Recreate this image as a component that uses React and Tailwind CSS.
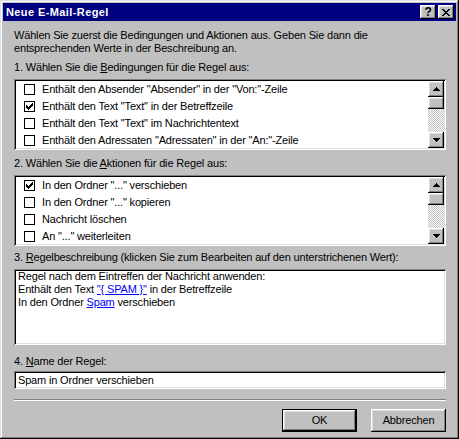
const raised =
  "shadow-[inset_-1px_-1px_#000,inset_1px_1px_#fff,inset_-2px_-2px_#808080,inset_2px_2px_#dfdfdf]";
const sunken =
  "shadow-[inset_1px_1px_#808080,inset_-1px_-1px_#fff,inset_2px_2px_#000,inset_-2px_-2px_#dfdfdf]";

const conditions = [
  { label: 'Enthält den Absender "Absender" in der "Von:"-Zeile', checked: false },
  { label: 'Enthält den Text "Text" in der Betreffzeile', checked: true },
  { label: 'Enthält den Text "Text" im Nachrichtentext', checked: false },
  { label: 'Enthält den Adressaten "Adressaten" in der "An:"-Zeile', checked: false },
];

const actions = [
  { label: 'In den Ordner "..." verschieben', checked: true },
  { label: 'In den Ordner "..." kopieren', checked: false },
  { label: "Nachricht löschen", checked: false },
  { label: 'An "..." weiterleiten', checked: false },
];

function Check({ checked }) {
  return (
    <div className="w-[11px] h-[11px] border border-black bg-white shrink-0 relative">
      {checked && (
        <svg width="9" height="9" viewBox="0 0 9 9" className="absolute left-0 top-0" shapeRendering="crispEdges">
          <path
            d="M1 3h1v3h-1z M2 4h1v3h-1z M3 5h1v3h-1z M4 4h1v3h-1z M5 3h1v3h-1z M6 2h1v3h-1z M7 1h1v3h-1z"
            fill="#000"
          />
        </svg>
      )}
    </div>
  );
}

function Arrow({ down }) {
  return (
    <svg width="7" height="4" viewBox="0 0 7 4" shapeRendering="crispEdges" className={down ? "rotate-180" : ""}>
      <path d="M3 0h1v1h1v1h1v1h1v1H0V3h1V2h1V1h1z" fill="#000" />
    </svg>
  );
}

function ScrollBar() {
  return (
    <div className="w-[16px] h-full flex flex-col shrink-0">
      <div className={`h-[16px] bg-[#c0c0c0] flex items-center justify-center ${raised}`}>
        <Arrow />
      </div>
      <div className={`h-[12px] bg-[#c0c0c0] ${raised}`} />
      <div className="flex-1 bg-[repeating-conic-gradient(#c0c0c0_0%_25%,#fff_0%_50%)] bg-[length:2px_2px]" />
      <div className={`h-[16px] bg-[#c0c0c0] flex items-center justify-center ${raised}`}>
        <Arrow down />
      </div>
    </div>
  );
}

function ListBox({ items }) {
  return (
    <div className={`mt-[5px] h-[71px] bg-white p-[2px] flex ${sunken}`}>
      <div className="flex-1 overflow-hidden">
        {items.map((item) => (
          <div key={item.label} className="h-[17px] flex items-center pl-[8px] whitespace-nowrap">
            <Check checked={item.checked} />
            <span className="ml-[7px]">{item.label}</span>
          </div>
        ))}
      </div>
      <ScrollBar />
    </div>
  );
}

export default function App() {
  return (
    <div
      className={`w-[459px] h-[439px] bg-[#c0c0c0] p-[3px] flex flex-col text-[11px] leading-[13px] tracking-[-0.17px] text-black font-['Liberation_Sans',Arial,sans-serif] shadow-[inset_-1px_-1px_#000,inset_1px_1px_#dfdfdf,inset_-2px_-2px_#808080,inset_2px_2px_#fff]`}
    >
      {/* title bar */}
      <div className="h-[18px] bg-[#000080] flex items-center pl-[3px] pr-[2px] text-white font-bold">
        <span className="flex-1 tracking-[0.4px]">Neue E-Mail-Regel</span>
        <div className={`w-[16px] h-[14px] bg-[#c0c0c0] text-black flex items-center justify-center mr-[2px] ${raised}`}>
          <span className="text-[12px] font-bold leading-none -mt-[1px]">?</span>
        </div>
        <div className={`w-[16px] h-[14px] bg-[#c0c0c0] flex items-center justify-center ${raised}`}>
          <svg width="8" height="7" viewBox="0 0 8 7" shapeRendering="crispEdges">
            <path
              d="M0 0h2v1h-2z M6 0h2v1h-2z M1 1h2v1h-2z M5 1h2v1h-2z M2 2h4v1h-4z M3 3h2v1h-2z M2 4h4v1h-4z M1 5h2v1h-2z M5 5h2v1h-2z M0 6h2v1h-2z M6 6h2v1h-2z"
              fill="#000"
            />
          </svg>
        </div>
      </div>

      <div className="pl-[11px] pr-[10px] flex flex-col">
        <p className="mt-[8px]">
          Wählen Sie zuerst die Bedingungen und Aktionen aus. Geben Sie dann die
          <br />
          entsprechenden Werte in der Beschreibung an.
        </p>

        <p className="mt-[6px]">
          1. Wählen Sie die <u>B</u>edingungen für die Regel aus:
        </p>
        <ListBox items={conditions} />

        <p className="mt-[7px]">
          2. Wählen Sie die <u>A</u>ktionen für die Regel aus:
        </p>
        <ListBox items={actions} />

        <p className="mt-[5px]">
          3. <u>R</u>egelbeschreibung (klicken Sie zum Bearbeiten auf den unterstrichenen Wert):
        </p>
        <div className={`mt-[5px] h-[76px] bg-white pl-[4px] pt-[1px] ${sunken}`}>
          <p>Regel nach dem Eintreffen der Nachricht anwenden:</p>
          <p>
            Enthält den Text <span className="text-[#0000ff] underline">"{"{ SPAM }"}"</span> in der Betreffzeile
          </p>
          <p>
            In den Ordner <span className="text-[#0000ff] underline">Spam</span> verschieben
          </p>
        </div>

        <p className="mt-[10px]">
          4. <u>N</u>ame der Regel:
        </p>
        <div className={`mt-[3px] h-[18px] bg-white pl-[4px] flex items-center ${sunken}`}>
          Spam in Ordner verschieben
        </div>

        <div className="mt-[10px] h-[2px] border-t border-t-[#808080] border-b border-b-white" />

        <div className="mt-[8px] flex justify-end gap-[14px]">
          <div className="w-[75px] h-[23px] border border-black">
            <div className={`w-full h-full bg-[#c0c0c0] flex items-center justify-center ${raised}`}>
              OK
            </div>
          </div>
          <div className={`w-[75px] h-[23px] bg-[#c0c0c0] flex items-center justify-center ${raised}`}>
            Abbrechen
          </div>
        </div>
      </div>
    </div>
  );
}
